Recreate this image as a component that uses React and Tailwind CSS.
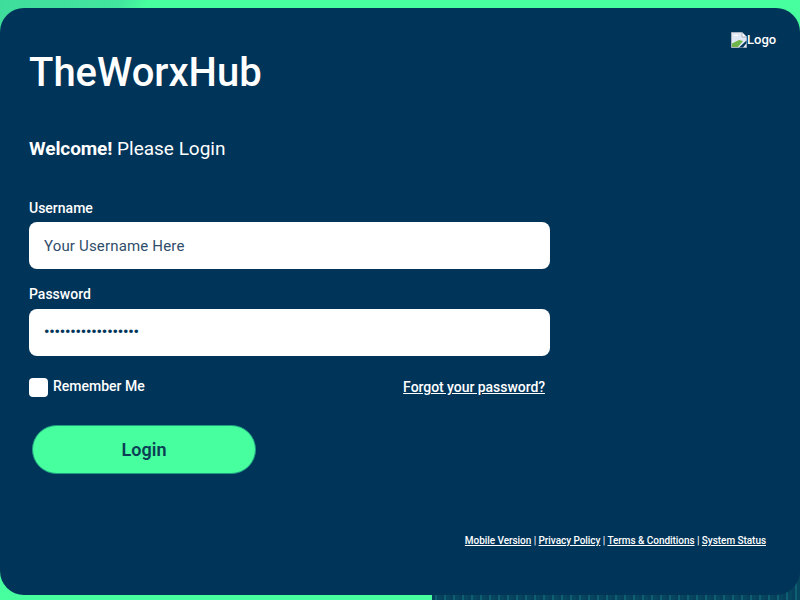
function BrokenImage() {
  return (
    <svg width="16" height="16" viewBox="0 0 16 16" className="shrink-0">
      <path d="M0.5 0.5H11L15.5 5V15.5H0.5Z" fill="#dfe7f5" stroke="#a9b2bd" />
      <path d="M11 0.5V5H15.5" fill="#fff" stroke="#a9b2bd" />
      <path d="M2 4c2-2 4-2 6 0z" fill="#fff" />
      <path d="M1 15V11.5L8 8l4 1-5 6z" fill="#6fb54a" />
      <path d="M8 15.5L15.5 8.5V11L12 15.5z" fill="#003459" />
    </svg>
  );
}

function Field({ label, inputClass, children }) {
  return (
    <div className="w-[521px]">
      <label className="block text-sm font-medium leading-[20px] text-white">{label}</label>
      <div className={`${inputClass} flex h-[47px] items-center rounded-lg bg-white px-[15px] text-[#003459]`}>
        {children}
      </div>
    </div>
  );
}

function App() {
  return (
    <div className="h-[600px] w-[800px] overflow-hidden bg-[linear-gradient(115deg,#3fdd9c_0,#42e69e_110px,#47ff9e_135px,transparent_135px),linear-gradient(#47ff9e_0_570px,transparent_570px),linear-gradient(90deg,#47ff9e_432px,transparent_432px),repeating-linear-gradient(90deg,#06405c_0_3px,#0f5f72_3px_5px,#07465f_5px_9px)] pt-2 font-['Roboto',sans-serif]">
      <div className="relative h-[587px] rounded-[24px] bg-[#003459] pl-[29px] pt-[39px]">
        <div className="absolute left-[731px] top-[24px] flex items-center text-[13px] font-medium leading-4 text-white">
          <BrokenImage />
          <span>Logo</span>
        </div>

        <h1 className="text-[40px] font-medium leading-[52px] text-white">TheWorxHub</h1>

        <p className="mt-[36px] text-[19px] leading-[28px] text-white">
          <b className="font-bold tracking-[-0.1px]">Welcome!</b> Please Login
        </p>

        <div className="mt-[35px] flex flex-col gap-[15px]">
          <Field label="Username" inputClass="mt-[4px]">
            <span className="mt-[1px] text-[15px] tracking-[0.17px] text-[#2f4d6a]">Your Username Here</span>
          </Field>
          <Field label="Password" inputClass="mt-[5px]">
            <span className="text-[15px] font-bold leading-none tracking-[-0.13px]">••••••••••••••••••</span>
          </Field>
        </div>

        <div className="mt-[21px] flex w-[516px] items-center justify-between">
          <div className="flex items-center gap-[5px]">
            <span className="h-[19px] w-[19px] rounded bg-white" />
            <span className="-mt-[3px] text-sm font-medium text-white">Remember Me</span>
          </div>
          <a className="text-sm font-medium tracking-[-0.05px] text-white underline">Forgot your password?</a>
        </div>

        <button className="ml-[3px] mt-[28px] flex h-[49px] w-[224px] items-center justify-center rounded-full border border-[#1f9d83] bg-[#47ff9e] text-lg font-semibold text-[#0b3d55]">
          Login
        </button>

        <div className="mr-[34px] mt-[61px] text-right text-[10px] font-medium leading-3 tracking-[-0.05px] text-white">
          <a className="underline">Mobile Version</a> | <a className="underline">Privacy Policy</a> | <a className="underline">Terms &amp; Conditions</a> | <a className="underline">System Status</a>
        </div>
      </div>
    </div>
  );
}

export default App;
